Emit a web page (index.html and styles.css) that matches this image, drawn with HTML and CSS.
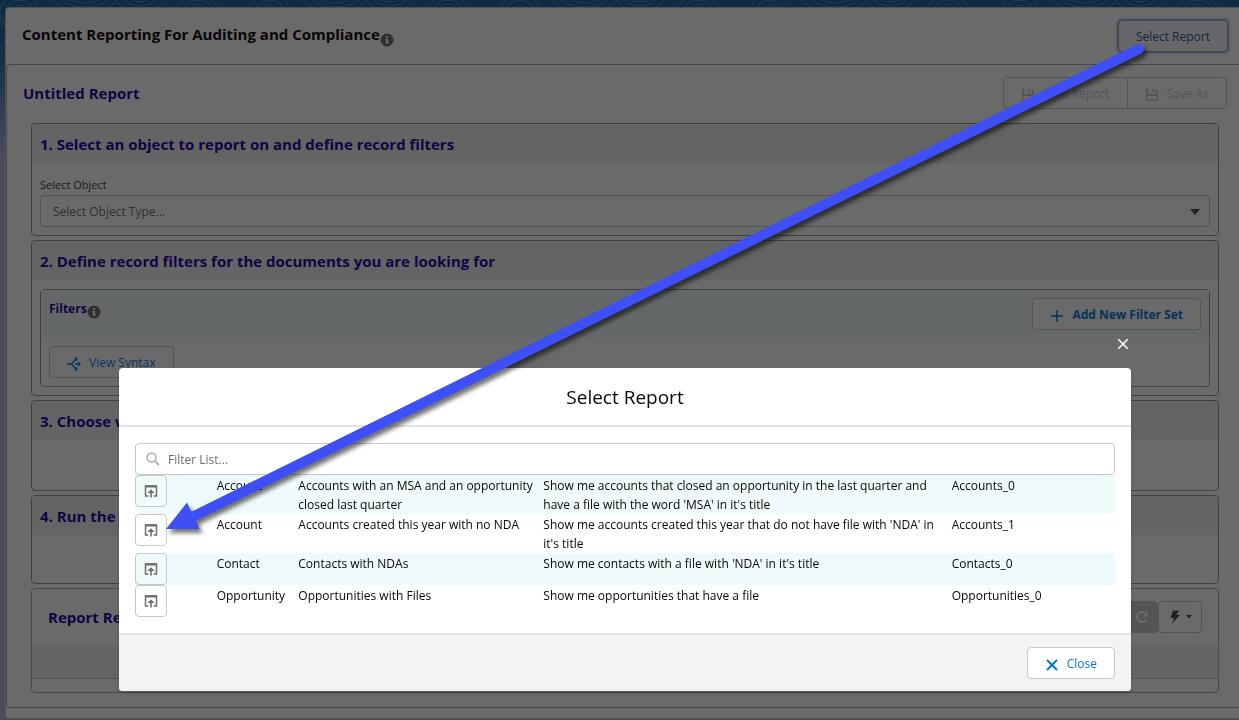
FILE: index.html
```html
<!DOCTYPE html>
<html lang="en">
<head>
<meta charset="utf-8">
<meta name="viewport" content="width=device-width, initial-scale=1">
<title>Content Reporting For Auditing and Compliance</title>
<link rel="stylesheet" href="styles.css">
</head>
<body>
<svg class="backdrop-art" aria-hidden="true">
  <defs>
    <pattern id="contours" width="250" height="200" patternUnits="userSpaceOnUse">
      <g fill="none" stroke="#4f86bd" stroke-width="1">
        <circle cx="20" cy="14" r="9"/><circle cx="20" cy="14" r="14"/><circle cx="20" cy="14" r="20"/>
        <ellipse cx="85" cy="-6" rx="18" ry="9"/><ellipse cx="85" cy="-6" rx="26" ry="13"/><ellipse cx="85" cy="-6" rx="35" ry="17"/>
        <ellipse cx="140" cy="-2" rx="8" ry="4"/><ellipse cx="140" cy="-2" rx="16" ry="8"/><ellipse cx="140" cy="-2" rx="24" ry="12"/>
        <ellipse cx="198" cy="22" rx="12" ry="18"/><ellipse cx="198" cy="22" rx="19" ry="22"/><ellipse cx="198" cy="22" rx="26" ry="26"/>
        <circle cx="-2" cy="22" r="6"/><circle cx="-2" cy="40" r="7"/><circle cx="-2" cy="85" r="8"/><circle cx="-4" cy="112" r="7"/>
      </g>
    </pattern>
  </defs>
  <rect width="100%" height="130" fill="url(#contours)"/>
</svg>

<main class="app">
  <header class="app-header">
    <h1 class="app-title">Content Reporting For Auditing and Compliance<svg class="info" viewBox="0 0 14 14" role="img" aria-label="Info"><circle cx="7" cy="7" r="6.5" fill="currentColor"/><path d="M6 3.3h2v1.7H6zM5.5 6h2.6v3.6h.7v1H5.3v-1H6V7h-.5z" fill="#fff"/></svg></h1>
    <button class="btn btn-focused" type="button">Select Report</button>
  </header>

  <div class="report">
    <div class="report-bar">
      <h2 class="heading">Untitled Report</h2>
      <div class="btn-group">
        <button class="btn" type="button" disabled><svg class="icon" viewBox="0 0 14 14" aria-hidden="true"><path d="M1.700 1v11.300h10.600V2.500M1.700 7.300h10.600" fill="none" stroke="currentColor" stroke-width="1.300"/><path d="M1 1h2v5h8V1l2 1.500V7.500H1zM7.500 1h2v3.500h-2z" fill="currentColor"/></svg>Save Report</button>
        <button class="btn" type="button" disabled><svg class="icon" viewBox="0 0 14 14" aria-hidden="true"><path d="M1.700 1v11.300h10.600V2.500M1.700 7.300h10.600" fill="none" stroke="currentColor" stroke-width="1.300"/><path d="M1 1h2v5h8V1l2 1.500V7.500H1zM7.500 1h2v3.500h-2z" fill="currentColor"/></svg>Save As</button>
      </div>
    </div>

    <div class="sections">
      <section class="section">
        <h3 class="section-head heading">1. Select an object to report on and define record filters</h3>
        <div class="section-body object-body">
          <label class="field-label" for="object-type">Select Object</label>
          <div class="select-box">
            <select class="select" id="object-type"><option>Select Object Type...</option></select>
            <svg class="caret" viewBox="0 0 10 6" aria-hidden="true"><path d="M0 0h10L5 6z" fill="currentColor"/></svg>
          </div>
        </div>
      </section>

      <section class="section">
        <h3 class="section-head heading">2. Define record filters for the documents you are looking for</h3>
        <div class="section-body filters-body">
          <div class="filters">
            <div class="filters-head">
              <h4 class="filters-title">Filters<svg class="info" viewBox="0 0 14 14" role="img" aria-label="Info"><circle cx="7" cy="7" r="6.5" fill="currentColor"/><path d="M6 3.3h2v1.7H6zM5.500 6h2.600v3.600h.7v1H5.300v-1H6V7h-.5z" fill="#fff"/></svg></h4>
              <button class="btn btn-strong" type="button"><svg class="icon" viewBox="0 0 14 14" aria-hidden="true"><path d="M7 1v12M1 7h12" stroke="currentColor" stroke-width="1.500"/></svg>Add New Filter Set</button>
            </div>
            <div class="filters-foot">
              <button class="btn" type="button"><svg class="icon" viewBox="0 0 14 14" aria-hidden="true"><path d="M0 7h4.500M9 2L4.500 7 9 12M8 7h4.500" fill="none" stroke="currentColor" stroke-width="1.300"/><path d="M6.500.7h3.800v3.800zM6.500 13.300h3.800V9.500zM11 4.500L14 7l-3 2.500z" fill="currentColor"/></svg>View Syntax</button>
            </div>
          </div>
        </div>
      </section>

      <section class="section">
        <h3 class="section-head heading">3. Choose what to display in the results</h3>
        <div class="section-body columns-body"></div>
      </section>

      <section class="section">
        <h3 class="section-head heading">4. Run the report</h3>
        <div class="section-body run-body"></div>
      </section>

      <section class="section results">
        <div class="results-head">
          <h3 class="heading">Report Results</h3>
          <div class="results-tools">
            <button class="tool tool-off" type="button" disabled aria-label="Refresh"><svg class="icon" viewBox="0 0 14 14" aria-hidden="true"><path d="M11.300 9.600A5 5 0 1 1 10.500 3.400L12 5" fill="none" stroke="currentColor" stroke-width="2"/><path d="M13 1v5.500H7.500z" fill="currentColor"/></svg></button>
            <button class="tool" type="button" aria-label="Actions"><svg class="icon" viewBox="0 0 14 14" aria-hidden="true"><path d="M5 .5h6L8.500 5H12L4 13.500 6 8H2.500z" fill="currentColor"/></svg><svg class="mini-caret" viewBox="0 0 6 4" aria-hidden="true"><path d="M0 0h6L3 3.500z" fill="currentColor"/></svg></button>
          </div>
        </div>
        <div class="results-band"></div>
        <div class="results-end"></div>
      </section>
    </div>
  </div>
</main>

<div class="overlay">
  <div class="modal-wrap">
    <button class="modal-x" type="button" aria-label="Close dialog"><svg class="x-icon" viewBox="0 0 12 12" aria-hidden="true"><path d="M1.300 1.300l9.400 9.400M10.700 1.300l-9.400 9.400" stroke="currentColor" stroke-width="1.500"/></svg></button>
    <div class="modal" role="dialog" aria-modal="true" aria-labelledby="modal-title">
      <header class="modal-head"><h2 class="modal-title" id="modal-title">Select Report</h2></header>
      <div class="modal-body">
        <div class="search">
          <svg class="icon" viewBox="0 0 14 14" aria-hidden="true"><circle cx="5.500" cy="5.500" r="4.500" fill="none" stroke="currentColor" stroke-width="1.500"/><path d="M8.800 8.800l4.200 4.200" stroke="currentColor" stroke-width="1.900"/></svg>
          <input class="search-input" type="text" placeholder="Filter List..." aria-label="Filter List">
        </div>
        <table class="reports" aria-label="Saved reports">
          <colgroup><col class="c1"><col class="c1"><col class="c3"><col class="c5"><col class="c2"></colgroup>
          <tbody>
            <tr>
              <td><button class="open" type="button" aria-label="Open Accounts_0"><svg class="open-icon" viewBox="0 0 14 14" aria-hidden="true"><path d="M4.300 12H1.500V2h11v10H9.700" fill="none" stroke="currentColor" stroke-width="1.500"/><path d="M1 1.200h12v2.300H1zM7 5.200l3.500 3.900H3.500zM6.200 8h1.600v5.500H6.200z" fill="currentColor"/></svg></button></td>
              <td class="cell">Account</td><td class="cell">Accounts with an MSA and an opportunity closed last quarter</td><td class="cell">Show me accounts that closed an opportunity in the last quarter and have a file with the word 'MSA' in it's title</td><td class="cell">Accounts_0</td>
            </tr>
            <tr>
              <td><button class="open" type="button" aria-label="Open Accounts_1"><svg class="open-icon" viewBox="0 0 14 14" aria-hidden="true"><path d="M4.300 12H1.500V2h11v10H9.700" fill="none" stroke="currentColor" stroke-width="1.500"/><path d="M1 1.200h12v2.300H1zM7 5.200l3.500 3.900H3.500zM6.200 8h1.600v5.500H6.200z" fill="currentColor"/></svg></button></td>
              <td class="cell">Account</td><td class="cell">Accounts created this year with no NDA</td><td class="cell">Show me accounts created this year that do not have file with 'NDA' in it's title</td><td class="cell">Accounts_1</td>
            </tr>
            <tr>
              <td><button class="open" type="button" aria-label="Open Contacts_0"><svg class="open-icon" viewBox="0 0 14 14" aria-hidden="true"><path d="M4.300 12H1.500V2h11v10H9.700" fill="none" stroke="currentColor" stroke-width="1.500"/><path d="M1 1.200h12v2.300H1zM7 5.200l3.500 3.900H3.500zM6.200 8h1.600v5.500H6.200z" fill="currentColor"/></svg></button></td>
              <td class="cell">Contact</td><td class="cell">Contacts with NDAs</td><td class="cell">Show me contacts with a file with 'NDA' in it's title</td><td class="cell">Contacts_0</td>
            </tr>
            <tr>
              <td><button class="open" type="button" aria-label="Open Opportunities_0"><svg class="open-icon" viewBox="0 0 14 14" aria-hidden="true"><path d="M4.300 12H1.500V2h11v10H9.700" fill="none" stroke="currentColor" stroke-width="1.500"/><path d="M1 1.200h12v2.300H1zM7 5.200l3.500 3.900H3.500zM6.200 8h1.600v5.500H6.200z" fill="currentColor"/></svg></button></td>
              <td class="cell">Opportunity</td><td class="cell">Opportunities with Files</td><td class="cell">Show me opportunities that have a file</td><td class="cell">Opportunities_0</td>
            </tr>
          </tbody>
        </table>
      </div>
      <footer class="modal-foot">
        <button class="btn" type="button"><svg class="icon" viewBox="0 0 14 14" aria-hidden="true"><path d="M2 2l10 10M12 2L2 12" stroke="currentColor" stroke-width="2"/></svg>Close</button>
      </footer>
    </div>
  </div>
</div>

<svg class="pointer" viewBox="0 0 1239 720" preserveAspectRatio="none" aria-hidden="true">
  <path d="M1139 49L190 518" stroke="#3d4ff5" stroke-width="10" stroke-linecap="round"/>
  <path d="M166 529L187 502.500 199.500 529z" fill="#3d4ff5"/>
</svg>
</body>
</html>
```
FILE: styles.css
```css
* {
  box-sizing: border-box;
}

body {
  margin: 0;
  padding: 7px 0 0 5px;
  min-height: 100vh;
  overflow: hidden;
  font-family: "Open Sans", "Noto Sans", sans-serif;
  font-size: 12px;
  line-height: 19px;
  color: #080707;
  background: linear-gradient(#1a629e 0, #1a629e 40px, #a8b7d8 160px, #a8b7d8 100%);
}

h1, h2, h3, h4 {
  margin: 0;
}

button, input, select {
  font: inherit;
}

.backdrop-art {
  position: absolute;
  top: 0;
  left: 0;
  width: 100%;
  height: 130px;
}

.app {
  position: relative;
  min-height: 712px;
  border: 1px solid #c9c7c5;
  border-right: 0;
  border-radius: 4px 0 0 4px;
  background: #fff;
}

.app-header {
  display: flex;
  justify-content: space-between;
  align-items: center;
  height: 56px;
  padding: 0 11px 0 16px;
}

.app-title {
  display: flex;
  align-items: center;
  padding-bottom: 4px;
  font-size: 15px;
  font-weight: 700;
  line-height: 20px;
}

.info {
  width: 14px;
  height: 14px;
  margin-top: 8px;
  color: #706e6b;
}

.app-title .info {
  margin-top: 12px;
}

.heading {
  font-size: 15px;
  font-weight: 700;
  color: #1c00a4;
}

.btn {
  display: flex;
  align-items: center;
  justify-content: center;
  gap: 8px;
  height: 32px;
  padding: 0 17px;
  border: 1px solid #c9c7c5;
  border-radius: 4px;
  background: #fff;
  color: #0176d3;
}

.btn .icon {
  margin-top: 3px;
}

.btn:disabled {
  color: #c9c7c5;
}

.btn-focused {
  border-color: #a0a8b0;
  background: #f4f6f9;
  color: #2a5ba8;
  box-shadow: 0 0 2px 1px #5aa5e0;
}

.btn-strong {
  font-weight: 700;
}

.btn-group {
  display: flex;
}

.btn-group .btn:first-child {
  border-right: 0;
  border-radius: 4px 0 0 4px;
}

.btn-group .btn:last-child {
  border-radius: 0 4px 4px 0;
}

.icon {
  width: 14px;
  height: 14px;
  flex: none;
}

.report {
  border: 1px solid #b0adab;
  border-right: 0;
  border-radius: 4px 0 0 4px;
  padding: 0 12px 14px 16px;
}

.report-bar {
  display: flex;
  justify-content: space-between;
  align-items: center;
  height: 58px;
  padding-bottom: 2px;
}

.sections {
  display: flex;
  flex-direction: column;
  gap: 4px;
  padding: 0 8px;
}

.section {
  border: 1px solid #989694;
  border-radius: 4px;
  overflow: hidden;
}

.section-head {
  height: 39px;
  padding: 1px 8px;
  line-height: 38px;
  background: #f0f0f0;
}

.object-body {
  padding: 12px 8px 8px;
}

.field-label {
  display: block;
  font-size: 11px;
  line-height: 20px;
  color: #3e3e3c;
}

.select-box {
  position: relative;
}

.select {
  display: block;
  width: 100%;
  height: 32px;
  padding: 0 12px;
  border: 1px solid #c9c7c5;
  border-radius: 4px;
  appearance: none;
  background: #fff;
  color: #706e6b;
}

.caret {
  position: absolute;
  right: 10px;
  top: 14px;
  width: 10px;
  height: 6px;
  color: #514f4d;
}

.filters-body {
  padding: 9px 8px 8px;
}

.filters {
  border: 1px solid #989694;
  border-radius: 4px;
}

.filters-head {
  display: flex;
  justify-content: space-between;
  align-items: flex-start;
  padding: 8px;
  background: #effbfb;
}

.filters-title {
  display: flex;
  align-items: center;
  height: 20px;
  font-size: 12px;
  color: #1c00a4;
}

.filters-foot {
  padding: 8px;
}

.columns-body {
  min-height: 50px;
}

.run-body {
  min-height: 48px;
}

.results {
  border-color: #b0adab;
}

.results-head {
  display: flex;
  justify-content: space-between;
  align-items: center;
  height: 56px;
  padding: 0 16px;
}

.results-tools {
  display: flex;
}

.tool {
  display: flex;
  align-items: center;
  justify-content: center;
  gap: 4px;
  width: 44px;
  height: 32px;
  padding: 0;
  border: 1px solid #c9c7c5;
  border-radius: 4px;
  background: #fff;
  color: #514f4d;
}

.tool-off {
  width: 32px;
  background: #c9c7c5;
  color: #fff;
}

.mini-caret {
  width: 6px;
  height: 4px;
}

.results-band {
  height: 34px;
  border-bottom: 1px solid #c9c7c5;
  background: #f0f0f0;
}

.results-end {
  height: 13px;
}

.overlay {
  position: fixed;
  inset: 0;
  display: flex;
  align-items: flex-end;
  padding: 0 108px 29px 119px;
  background: rgba(8, 7, 7, 0.6);
}

.modal-wrap {
  display: flex;
  flex-direction: column;
  width: 100%;
}

.modal-x {
  align-self: flex-end;
  width: 16px;
  height: 16px;
  margin-bottom: 16px;
  padding: 2px;
  border: 0;
  background: none;
  color: #fff;
}

.x-icon {
  display: block;
  width: 12px;
  height: 12px;
}

.modal {
  border-radius: 4px;
  overflow: hidden;
  background: #fff;
  box-shadow: 0 2px 3px rgba(0, 0, 0, 0.2);
}

.modal-head {
  padding: 16px 16px 15px;
  border-bottom: 2px solid #e4e4e4;
  text-align: center;
}

.modal-title {
  font-size: 19px;
  font-weight: 400;
  line-height: 26px;
}

.modal-body {
  padding: 16px;
}

.search {
  display: flex;
  align-items: center;
  gap: 8px;
  height: 32px;
  padding: 0 10px;
  border: 1px solid #c9c7c5;
  border-radius: 4px;
  color: #b0adab;
}

.search-input {
  flex: 1;
  min-width: 0;
  padding: 0;
  border: 0;
  outline: 0;
  background: none;
  color: #080707;
}

.search-input::placeholder {
  color: #706e6b;
  opacity: 1;
}

.reports {
  width: 100%;
  table-layout: fixed;
  border-collapse: collapse;
}

.reports tr:nth-child(odd) {
  background: #effbfb;
}

.reports td {
  padding: 0;
  vertical-align: top;
}

.reports .cell {
  padding-top: 1px;
}

.c1 { width: 8.3333%; }
.c2 { width: 16.6667%; }
.c3 { width: 25%; }
.c5 { width: 41.6667%; }

.open {
  display: flex;
  align-items: center;
  justify-content: center;
  width: 32px;
  height: 32px;
  padding: 0;
  border: 1px solid #c9c7c5;
  border-radius: 4px;
  background: none;
  color: #706e6b;
}

.open-icon {
  width: 14px;
  height: 14px;
}

.modal-foot {
  display: flex;
  justify-content: flex-end;
  padding: 12px 16px;
  border-top: 2px solid #e4e4e4;
  background: #f3f3f3;
}

.pointer {
  position: fixed;
  top: 0;
  left: 0;
  width: 100%;
  height: 100%;
  pointer-events: none;
  filter: drop-shadow(3px 4px 2px rgba(0, 0, 0, 0.55));
}
```
